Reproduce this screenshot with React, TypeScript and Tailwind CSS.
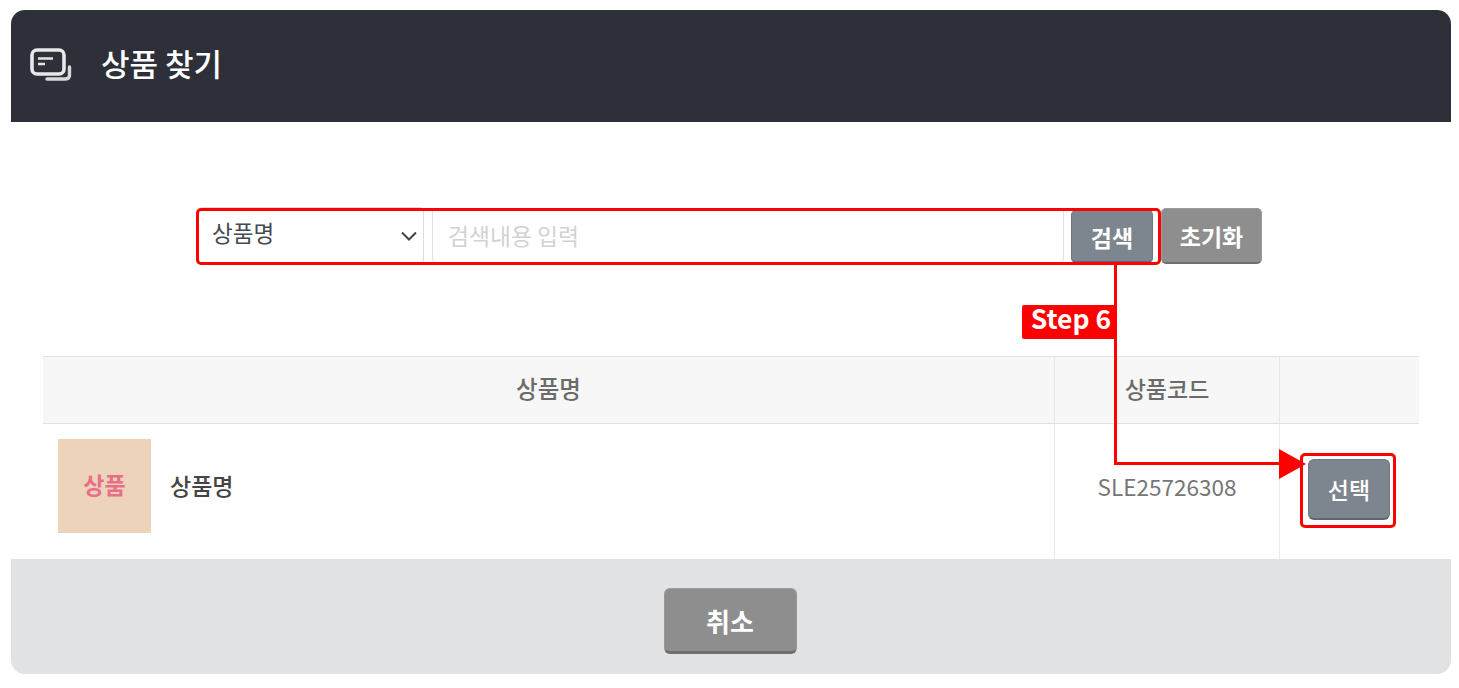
const font = "font-['Noto_Sans_CJK_KR','Noto_Sans',sans-serif]"

function CardsIcon() {
  return (
    <svg width="42" height="34" viewBox="0 0 42 34" fill="none" className="shrink-0">
      <rect x="2" y="2" width="32" height="24" rx="5" stroke="#e8e8e8" strokeWidth="3.6" />
      <path d="M8 10.5H23M8 16H15" stroke="#e4e4e4" strokeWidth="2.6" />
      <path d="M39.5 19V27C39.5 29.5 38 31 35.5 31H17" stroke="#d8d8d8" strokeWidth="3.4" strokeLinecap="round" />
    </svg>
  )
}

export default function App() {
  return (
    <div className={`${font} relative w-[1459px] h-[688px] overflow-hidden bg-white pt-[10px] pl-[11px]`}>
      <div className="flex flex-col w-[1440px] h-[664px] rounded-[14px] overflow-hidden bg-white">

        {/* Header */}
        <div className="flex items-center h-[112px] pl-[19px] pb-[3px] bg-[#2d3039] shrink-0">
          <CardsIcon />
          <h1 className="ml-[29px] mb-[4px] text-[31px] leading-none font-medium text-white">상품 찾기</h1>
        </div>

        {/* Search */}
        <div className="flex justify-start pt-[85px] pl-[187px] h-[234px] shrink-0">
          <div className="flex items-start">
            <div className="flex items-center justify-between w-[226px] h-[57px] pl-[13px] pr-[5px] pb-[2px] bg-white border border-[#dcdcdc] rounded-[4px]">
              <span className="text-[22.5px] leading-none text-[#444b52] relative top-[-2px]">상품명</span>
              <svg width="18" height="12" viewBox="0 0 18 12" fill="none" className="relative top-[1px]">
                <path d="M2 2.5L9 9.5L16 2.5" stroke="#3f444a" strokeWidth="2" />
              </svg>
            </div>
            <div className="flex items-center w-[632px] h-[55px] mt-[1px] ml-[8px] pl-[15px] pt-[2px] bg-white border border-[#e2e2e2] rounded-[4px] text-[22.8px] leading-none text-[#d2d2d2]">
              검색내용 입력
            </div>
            <button className="w-[82px] h-[53px] mt-[3px] ml-[7px] pt-[2px] rounded-[5px] bg-[#7d868e] border border-[#6d767d] border-b-2 border-b-[#5f676e] text-[23px] leading-none font-bold text-white">검색</button>
            <button className="w-[101px] h-[56px] mt-[1px] ml-[8px] pt-[2px] rounded-[5px] bg-[#8e8e8e] border border-[#9a9a9a] border-b-2 border-b-[#6f6f6f] text-[23px] leading-none font-bold text-white">초기화</button>
          </div>
        </div>

        {/* Table */}
        <div className="flex-1 mx-[32px] grid grid-cols-[1011px_225px_140px] grid-rows-[67px_1fr] border-t border-t-[#e2e2e2]">
          <div className="flex items-center justify-center pb-[3px] bg-[#f7f7f7] border-b border-b-[#e0e0e0] text-[23.5px] font-medium text-[#6b6b6b]">상품명</div>
          <div className="flex items-center justify-center pb-[3px] bg-[#f7f7f7] border-b border-b-[#e0e0e0] border-l border-l-[#e8e8e8] text-[23px] font-medium text-[#6b6b6b]">상품코드</div>
          <div className="bg-[#f7f7f7] border-b border-b-[#e0e0e0] border-l border-l-[#e8e8e8]" />
          <div className="flex items-start pt-[15px] pl-[15px]">
            <div className="flex items-center justify-center w-[93px] h-[94px] bg-[#edd3ba] pb-[4px] text-[23px] leading-none font-bold text-[#e76f88]">상품</div>
            <span className="ml-[19px] mt-[35px] text-[23px] leading-none font-medium text-[#444444]">상품명</span>
          </div>
          <div className="flex items-start justify-center pt-[46px] border-l border-l-[#ebebeb] text-[22.5px] leading-[32px] text-[#767676]">SLE25726308</div>
          <div className="flex items-start justify-center pt-[35px] pr-[1px] border-l border-l-[#ebebeb]">
            <button className="w-[82px] h-[61px] rounded-[6px] bg-[#7d868e] border border-[#6d767d] border-b-2 border-b-[#5f676e] text-[23px] leading-none font-medium text-white">선택</button>
          </div>
        </div>

        {/* Footer */}
        <div className="flex justify-center items-start h-[115px] pt-[29px] pr-[2px] bg-[#e1e2e4] shrink-0">
          <button className="w-[133px] h-[66px] pt-[2px] rounded-[6px] bg-[#8e8e8e] border border-[#9a9a9a] border-b-[3px] border-b-[#6f6f6f] text-[26px] leading-none font-bold text-white">취소</button>
        </div>
      </div>

      {/* Annotation overlay */}
      <div className="absolute left-[196px] top-[208px] w-[965px] h-[57px] border-[3px] border-[#ff0000] rounded-[5px]" />
      <div className="absolute left-[1114px] top-[265px] w-[3px] h-[200px] bg-[#ff0000]" />
      <div className="absolute left-[1114px] top-[462px] w-[170px] h-[3px] bg-[#ff0000]" />
      <div className="absolute left-[1022px] top-[305px] flex items-center justify-center w-[94px] h-[34px] pb-[8px] pl-[4px] rounded-[2px] bg-[#ff0000] text-[26.5px] leading-none font-bold text-white">Step 6</div>
      <svg className="absolute left-[1279px] top-[448px]" width="27" height="32" viewBox="0 0 27 32">
        <path d="M0 1L27 16L0 31Z" fill="#ff0000" />
      </svg>
      <div className="absolute left-[1300px] top-[453px] w-[96px] h-[75px] border-[3px] border-[#ff0000] rounded-[5px]" />
    </div>
  )
}
